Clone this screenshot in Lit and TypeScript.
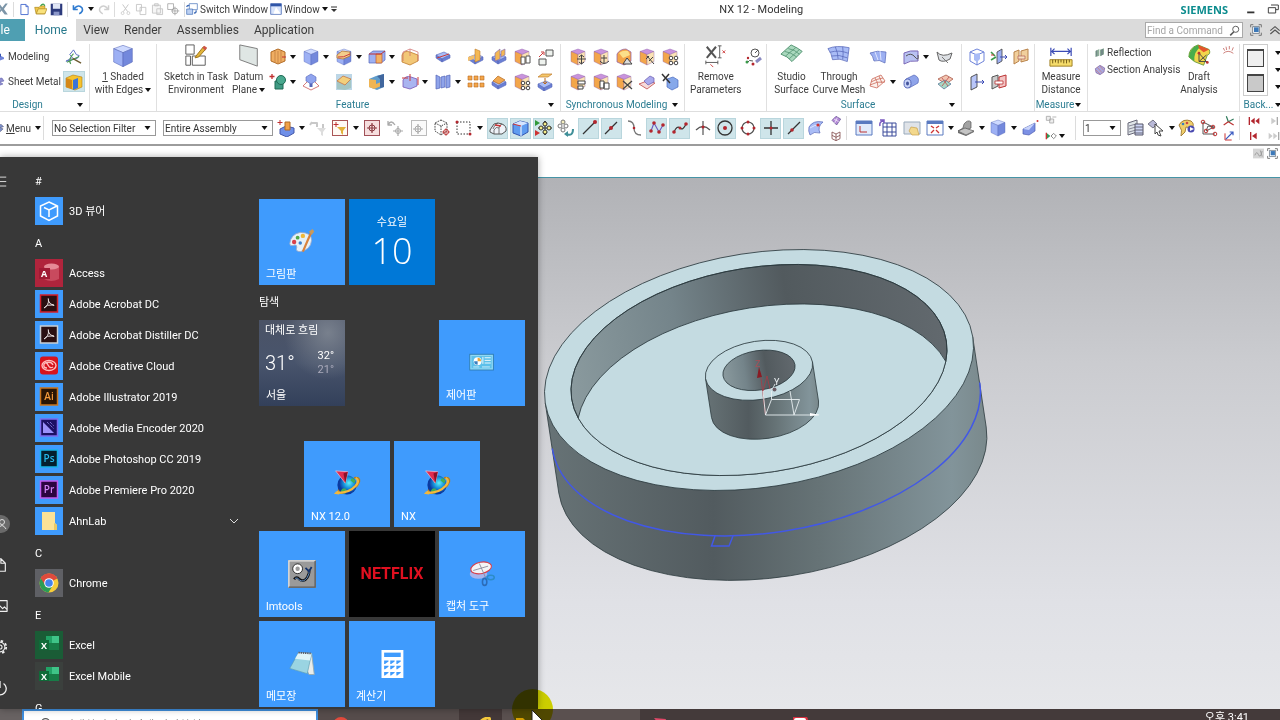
import { LitElement, html, svg, css, nothing, TemplateResult, SVGTemplateResult } from "lit";
import { customElement } from "lit/decorators.js";
import { classMap } from "lit/directives/class-map.js";

type Art = SVGTemplateResult | SVGTemplateResult[];

const draw = (art: Art, size = 18, box = 18): TemplateResult =>
  html`<svg width=${size} height=${size} viewBox="0 0 ${box} ${box}" fill="none" aria-hidden="true">${art}</svg>`;

const line = (d: string, color = "#444", w = 1, fill = "none") =>
  svg`<path d=${d} stroke=${color} stroke-width=${w} fill=${fill} stroke-linejoin="round"/>`;
const dot = (x: number, y: number, r = 1.5, fill = "#b3262e") => svg`<circle cx=${x} cy=${y} r=${r} fill=${fill}/>`;
const ring = (x: number, y: number, r: number, color = "#444", w = 1, fill = "none") =>
  svg`<circle cx=${x} cy=${y} r=${r} stroke=${color} stroke-width=${w} fill=${fill}/>`;

const box3 = (top: string, left: string, right: string, edge: string, extra: Art = []) => svg`
  <path d="M9 1 16 3.500 9 6.500 2 3.500Z" fill=${top} stroke=${edge} stroke-width=".4"/>
  <path d="M2 3.500 9 6.500V17L2 13.500Z" fill=${left} stroke=${edge} stroke-width=".4"/>
  <path d="M16 3.500 9 6.500V17L16 13.500Z" fill=${right} stroke=${edge} stroke-width=".4"/>${extra}`;
const blue = (extra: Art = []) => box3("#cdd9ff", "#9db0f4", "#7388dc", "#5364b5", extra);
const sync = (extra: Art = []) => box3("#c993dc", "#f3a64a", "#fbe3b4", "#8c5aa8", extra);
const slab = (y: number, a = "#a9bcf6", b = "#6b80d6") => svg`
  <path d=${`M2 ${y}L10 ${y - 3} 16 ${y}L8 ${y + 4}Z`} fill=${a} stroke="#5566b8" stroke-width=".6"/>
  <path d=${`M2 ${y}V${y + 3}L8 ${y + 7}V${y + 4}ZM8 ${y + 4}V${y + 7}L16 ${y + 3}V${y}Z`} fill=${b} stroke="#5566b8" stroke-width=".6"/>`;
const frame = (color: string, fill: string) =>
  svg`<rect x="1.500" y="1.500" width="15" height="15" stroke=${color} fill=${fill}/>`;
const target = (c: string, x = 9, y = 9) => line(`M${x} ${y - 5}V${y + 5}M${x - 5} ${y}H${x + 5}`, c, 1.2);
const fourDots = [ring(10, 10, 1.8, "#444", 1, "#fff"), ring(15, 10, 1.8, "#444", 1, "#fff"), ring(10, 15, 1.8, "#444", 1, "#fff"), ring(15, 15, 1.8, "#444", 1, "#fff")];

const icons: Record<string, Art> = {
  nx: svg`<path d="M-6 2H-1L3 7 7 2H10L5 9 10 16H6L2 11-2 16H-6L1 9Z" fill="#7c95a8"/>`,
  fresh: line("M4 2H11L14 5V16H4ZM11 2V5H14", "#4c6fd0", 1.3, "#fff"),
  open: svg`<path d="M1 6H7L9 4H15V15H3Z" fill="#f0c64a" stroke="#b08a20"/><path d="M3 15 6 8H18L15 15Z" fill="#f9e27c" stroke="#b08a20"/><path d="M9 4Q13-1 15 4" stroke="#3aa04a" stroke-width="1.500"/>`,
  save: svg`<path d="M1 1H17V17H1Z" fill="#2c3a7c"/><path d="M4 1H14V8H4Z" fill="#dfe5f5"/><path d="M5 12H13V17H5Z" fill="#8b97c9"/>`,
  undo: line("M3 8Q9 1 14 7 16 12 10 15M2 3V9H8", "#2f7bd0", 2.2),
  redo: line("M15 8Q9 1 4 7 2 12 8 15M16 3V9H10", "#cfcfcf", 2),
  cut: [line("M5 2 12 12M13 2 6 12", "#c4c4c4", 1.3), ring(5, 14, 2, "#c4c4c4"), ring(13, 14, 2, "#c4c4c4")],
  copy: line("M2 2H9V11H2ZM7 6H15V16H7Z", "#c4c4c4", 1.2, "#fff"),
  paste: line("M2 3H13V14H2ZM5 1H10V4H5ZM8 8H16V16H8Z", "#c4c4c4", 1.2, "#f6f6f6"),
  move: [line("M1 1H9V9H1ZM6 11H17M11 5V17", "#999"), ring(11, 11, 4, "#999")],
  swap: svg`<path d="M5 1H17V10H5Z" fill="#fff" stroke="#3d6ab5"/><path d="M1 9H10V17H1Z" fill="#bcd0f2" stroke="#3d6ab5"/><path d="M1 6Q2 3 5 4M12 15Q16 15 15 11" stroke="#3d6ab5" stroke-width="2"/>`,
  win: svg`<path d="M1 1H17V17H1Z" fill="#d8e4fb" stroke="#2f55a8"/><path d="M1 1H17V5H1Z" fill="#2f55a8"/><path d="M9 6 16 16H5Z" fill="#fff"/>`,
  modelling: svg`<path d="M-6 10 2 6 12 11V14L4 17-6 13Z" fill="#6f84da"/><path d="M2 2 6 4V10L2 8Z" fill="#3a57b5"/>`,
  metal: svg`<path d="M-4 4 8 2 12 8 4 10 10 14 2 17-4 14Z" fill="#8f8fd0" stroke="#5a5aa8"/>`,
  sketchCurve: [line("M1 14 8 10 5 7 9 2 12 7 15 8 13 11Z", "#5569c0"), line("M2 15 15 9M6 17Q3 12 9 6", "#4c9a55", 1.2), line("M8 11 17 16", "#6c5a30", 1.5)],
  convert: svg`<path d="M1 5 8 2 17 4V14L10 17 1 14Z" fill="#f6c22c" stroke="#b37c10" stroke-width=".6"/><path d="M8 7 13 5V15L8 17Z" fill="#3b74d8"/><path d="M1 5 7 7V16L1 14Z" fill="#d58818"/>`,
  shaded: blue(),
  sketchTask: svg`<path d="M2 1H11V11H2ZM2 13H7V23H2ZM9 13H23V23H9Z" stroke="#555"/><path d="M13 13 21 3 24 5 16 14 12 15Z" fill="#e2b53a" stroke="#9a6f18"/><path d="m20 4 2-2 3 2-2 3Z" fill="#cf5548"/>`,
  plane: svg`<path d="M3 1 22 5V24L3 17Z" fill="#dfe6e4" stroke="#777"/>`,
  extrude: svg`<path d="M2 4 9 1 16 4V13L9 16 2 13Z" fill="#f0ae62" stroke="#b06a24"/><path d="M6 3V15M9 3V16M12 3V15" stroke="#c98746"/><path d="M13 9H17" stroke="#c03030"/>`,
  block: blue(),
  hole: blue([svg`<path d="M2 7 7 3 15 4V8L8 11 2 10Z" fill="#f3cd8c" stroke="#b06a24" stroke-width=".7"/><path d="M3 9Q8 10 15 6" stroke="#cc3a3a"/>`]),
  blend: svg`<path d="M1 6 5 3H17V12L13 15H1Z" fill="#9db0f2" stroke="#5566b8" stroke-width=".7"/><path d="M8 6H14V15H8Z" fill="#f3b264" stroke="#c05a30" stroke-width=".7"/><path d="M1 6H13L17 3" stroke="#c03030"/>`,
  shell: svg`<path d="M1 7Q3 2 9 4L17 7V13L9 17 1 14Z" fill="#f2c777" stroke="#c07c2c" stroke-width=".8"/><path d="M2 4 9 1 17 4V13M2 4V13M9 1V8" stroke="#cf6a6a" stroke-width=".7"/>`,
  unite: svg`<path d="M6 8H14V16H6Z" fill="#3f9a83" stroke="#1f6a55"/><circle cx="12" cy="7" r="4.500" fill="#4aa98f" stroke="#1f6a55"/><path d="M3 1V6M.5 3.500H5.500" stroke="#c03030" stroke-width="1.300"/>`,
  draftHole: svg`<path d="M9 5 17 13 9 17 1 13Z" stroke="#cc5a5a" stroke-width=".8"/><path d="M9 9V14" stroke="#5566b8" stroke-width="3"/><path d="M4 4 9 1 14 4V8L9 11 4 8Z" fill="#90a4ee" stroke="#5566b8" stroke-width=".6"/>`,
  draftFace: svg`<path d="M1 1H17V17H1Z" fill="#bcd6e6"/><path d="M2 8V16L10 17V12ZM16 6V15L10 17V12Z" fill="#a5c6c4"/><path d="M2 8 8 3 16 6 10 12Z" fill="#f3cf7c" stroke="#c06a3a" stroke-width=".7"/>`,
  trim: svg`<path d="M1 6 8 3 16 1V14L9 17 1 14Z" fill="#5f9ccb"/><path d="M1 6 8 7V11L13 9V13L6 16 1 14Z" fill="#efb554"/><path d="M9 3 16 1V14L12 15V6Z" fill="#41679e"/>`,
  offset: svg`<path d="M2 7Q5 2 10 4L16 6V13L9 16 2 14Z" fill="#a9b4f0" stroke="#7a55b5" stroke-width=".8"/><path d="M9 1V8M1 5H7M17 4V12" stroke="#cc3a3a"/>`,
  slabTrim: [slab(7), line("M3 10 15 6", "#cc3a3a")],
  patternCol: svg`<path d="M2 2 6 4V15L2 16ZM7 4 11 3V14L7 15ZM12 3 16 2V14L12 15Z" fill="#8fa4ea" stroke="#5566b8" stroke-width=".7"/>`,
  orangeA: [slab(9), svg`<path d="M8 1 13 3V12L8 14Z" fill="#f4b854" stroke="#c07c2c" stroke-width=".6"/><path d="M1 9 7 7V11L1 13Z" fill="#f4c06c"/>`],
  orangeB: [slab(9), svg`<path d="M5 5 10 1V11L5 13ZM11 3 15 1V7L11 9Z" fill="#f4b854" stroke="#7a68b8" stroke-width=".6"/>`],
  syncCopy: sync(line("M8 9H12V16H8ZM13 8H17V15H13Z", "#555", 1, "#fff")),
  align: [line("M10 2H17V8H10ZM3 11H10V17H3Z", "#555", 1, "#eef2ee"), line("M3 9 7 5M5 4H8V7", "#cc3a3a")],
  dotsO: [3, 9, 15].map((x) => svg`<path d=${`M${x - 2} 3H${x + 2}V7H${x - 2}ZM${x - 2} 10H${x + 2}V14H${x - 2}Z`} fill="#f3a64a" stroke="#b86a20" stroke-width=".6"/>`),
  slabO: [slab(9), svg`<path d="M3 8 8 3 15 7 9 11Z" fill="#f0a850" stroke="#b86a20" stroke-width=".7"/>`],
  syncDots: sync(fourDots),
  liftO: [slab(11), svg`<path d="M2 4 6 1H16L12 4Z" fill="#f4c86c" stroke="#c07c2c" stroke-width=".7"/><path d="M9 5V11M7 9 9 11 11 9" stroke="#b86a20"/>`],
  s1: sync(line("M8 11H17M12.500 7V16M10 9 12.500 7 15 9M10 14 12.500 16 15 14", "#444")),
  s2: sync(line("M12 7V16M9 10H15M8 13Q12 18 17 13", "#444")),
  s3: svg`<path d="M2 6Q5 1 11 1L16 4V13L9 17 2 14Z" fill="#f3a64a" stroke="#8c5aa8" stroke-width=".7"/><path d="M4 5Q8 2 13 3L15 7 8 10Z" fill="#fbe08a"/><path d="M8 16 12 10 17 16Z" fill="#ddd" stroke="#444"/>`,
  s4: sync(line("M9 8 16 16M11 13 15 9M8 11 11 8", "#444")),
  s5: sync(fourDots),
  s6: sync(line("M9 8H16V11H9ZM9 13H14V16H9Z", "#444", 1, "#fff")),
  s7: sync(line("M8 8H12V15H8ZM12 10H17V16H12Z", "#444", 1, "#fff")),
  s8: sync(line("M8 8 17 16M17 8 8 16", "#444", 1.3)),
  s9: svg`<path d="M1 11 9 8 17 10 9 16Z" fill="#f6dada" stroke="#cc6a6a"/><path d="M6 8 12 3 16 5V9L10 12Z" fill="#a9a9ec" stroke="#6a5ab0" stroke-width=".7"/>`,
  s10: [svg`<path d="M6 6 12 4 17 7V14L11 17 6 14Z" fill="#86a8ea" stroke="#4c6cc0" stroke-width=".7"/>`, line("M1 1 9 10M8 1 2 8", "#333", 1.5)],
  removeP: [line("M3 3 13 15M13 3 3 15", "#555", 2.2), line("M17 2V15M15 2H19M15 15H19M2 20H15M2 18V22M15 18V22", "#555"), line("M20 7 23 10M23 7 20 10M7 22 10 25", "#cc3a3a")],
  params: [ring(10, 5, 4, "#555"), line("M10 5 13 2M2 15Q4 11 8 13", "#555"), line("M11 14 16 10", "#8a8ac0", 3), dot(2, 14, 1.5, "#3a9a4a"), dot(8, 16), dot(3, 10, 1.2)],
  studio: svg`<path d="M1 11 12 1Q19 4 24 8L13 19Q8 13 1 11Z" fill="#a9d8bd" stroke="#4c8f6c"/><path d="M5 8Q12 9 18 14M9 5Q16 6 21 11M6 13 17 4M10 16 21 6" stroke="#4c8f6c" stroke-width=".8"/>`,
  mesh: svg`<path d="M1 5Q10 1 24 4L22 19Q14 15 6 17Q5 10 1 5Z" fill="#a9bcf6" stroke="#5566b8" stroke-width=".8"/><path d="M9 3Q12 10 12 16M17 3Q18 10 17 17M3 9Q13 6 23 10M5 13Q13 11 22 15" stroke="#5566b8" stroke-width=".8"/>`,
  sheet: svg`<path d="M1 5Q8 2 17 4L16 15Q10 11 5 13Q4 8 1 5Z" fill="#9db0f2" stroke="#5566b8" stroke-width=".7"/><path d="M6 4 9 12M11 3 12 12" stroke="#dfe5ff"/>`,
  ruled: svg`<path d="M2 5Q8 2 16 3V13Q8 12 2 16Z" fill="#b9c2f2" stroke="#7a68b8"/><path d="M4 8Q9 4 13 9T16 7" stroke="#555"/>`,
  fold: svg`<path d="M1 4Q6 10 16 5L14 11Q7 15 3 12Z" fill="#dde0e4" stroke="#666"/><path d="M6 9 12 15" stroke="#777"/>`,
  sweep: svg`<path d="M3 6 12 2 16 8 8 15 1 13Z" fill="#fbf1ec" stroke="#cc6a5a" stroke-width=".8"/><path d="M2 9Q7 6 14 5M6 5Q9 9 9 14M1 12Q8 8 16 9M10 3 13 10" stroke="#cc6a5a" stroke-width=".8"/>`,
  tube: svg`<path d="M4 6 12 2Q18 4 16 10L7 15Z" fill="#8fa4ea" stroke="#5566b8" stroke-width=".7"/><ellipse cx="5.500" cy="10.500" rx="3.500" ry="4.500" fill="#c9d4f8" stroke="#5566b8"/><ellipse cx="5.500" cy="10.500" rx="1.500" ry="2" fill="#44549c"/>`,
  patch: svg`<path d="M2 6 10 2 17 6 10 11Z" fill="#f3c4b0" stroke="#aa5a4a" stroke-width=".8"/><path d="M2 11 9 7 15 11 8 16Z" fill="#a9d8c4" stroke="#5a7a9a" stroke-width=".8"/><path d="M6 5 12 13M13 4 6 13" stroke="#bb4a4a" stroke-width=".8"/>`,
  wire: svg`<path d="M9 1 16 4V13L9 17 2 13V4ZM2 4 9 7 16 4M9 7V17" stroke="#6f84da"/><path d="M6 6 12 5V11L9 14 6 12Z" fill="#a9bcf6"/>`,
  moveF: svg`<path d="M7 4 12 1V13L7 16Z" fill="#9db0f2" stroke="#444" stroke-width=".8"/><path d="M10 9H17M15 7 17 9 15 11" stroke="#3a4ab5"/><path d="M1 4 5 8M1 12 6 9" stroke="#3a9a4a" stroke-width="1.600"/><path d="M1 7H4" stroke="#c33"/>`,
  orangeF: svg`<path d="M2 4 7 2V13L2 16ZM9 3 16 1V12L9 14Z" fill="#f1cf9c" stroke="#b8824a"/><path d="M6 8H13V11H6Z" fill="#f8e4c0" stroke="#b05a5a" stroke-width=".7"/>`,
  moveE: svg`<path d="M3 4 9 1V14L3 17Z" fill="#b9c6f8" stroke="#444" stroke-width=".9"/><path d="M7 9H16M14 7 16 9 14 11" stroke="#3a4ab5"/>`,
  redF: svg`<path d="M2 4 8 2V13L2 16Z" fill="#ccc" stroke="#555"/><path d="M9 4 16 2V13L9 15Z" fill="#f3c4c4" stroke="#b33"/><path d="M5 8H13V11H5Z" fill="#fff" stroke="#b33" stroke-width=".8"/>`,
  measure: svg`<path d="M2 4V13M24 4V13M3 8H23M6 5 3 8 6 11M20 5 23 8 20 11" stroke="#3a4ab5" stroke-width="1.300"/><path d="M1 17H25V24H1Z" fill="#f5dc6a" stroke="#9a7c20"/><path d="M4 17V21M7 17V20M10 17V21M13 17V20M16 17V21M19 17V21M22 17V20" stroke="#6a5410"/>`,
  reflect: svg`<path d="M2 6 8 3V13L2 15ZM9 4 15 2V11L9 14Z" fill="#8fae9a"/><path d="M4 5V14M11 4V13M13 3V12" stroke="#5c6c78"/>`,
  section: svg`<path d="M2 7 9 2 16 6 15 12 9 16 3 13Z" fill="#a9a9e0" stroke="#7a5a9a"/><path d="M5 5 12 13M9 3 14 9M3 9 9 15" stroke="#cc7a7a"/>`,
  draftA: svg`<path d="M2 14Q2 4 12 1L24 6Q26 11 22 12L18 23 8 19Z" fill="#f1d54a" stroke="#6a9a3a"/><path d="M2 14Q3 4 12 1L15 3Q7 8 8 19Z" fill="#49ad4b"/><path d="M12 1 24 6 18 9 13 5Z" fill="#e4552c"/><path d="M13 10 22 20M13 19 21 12M13 10V19H22" stroke="#444"/><circle cx="13" cy="10" r="1.500" fill="#b33"/><circle cx="22" cy="20" r="1.500" fill="#b33"/>`,
  spark: line("M2 14Q9 8 17 14M4 10 2 6M7 9 6 4M11 8 11 3M15 10 17 5", "#b5443c"),
  addCube: svg`<path d="M3 10 9 7 17 9V14L10 18 3 15Z" fill="#6f8fe8" stroke="#4457a8"/><path d="M8 3H13V11H8Z" fill="#f1a048" stroke="#b06a24"/><path d="M3 1V6M.5 3.500H5.500" stroke="#c03030"/>`,
  filterG: [line("M2 4H8V8M14 5V9M1 6 3 3", "#c8c8c8", 2), svg`<path d="M8 9H17L14 13V17L12 16V13Z" fill="#ddd"/>`],
  filterB: [frame("#a55", "#fffaf4"), line("M5 3V8M2.500 5.500H7.500", "#c03030"), svg`<path d="M6 8H15L12 12V16L10 14V12Z" fill="#e3b23a"/>`],
  targetR: [frame("#a05058", "#f6dede"), ring(9, 9, 3, "#8a3a40"), target("#8a3a40")],
  rotate: [line("M2 6Q5 0 9 6M2 2V6H6", "#aaa", 1.3), target("#aaa", 12, 12), ring(12, 12, 2.5, "#aaa")],
  targetG: [frame("#bbb", "#fafafa"), ring(8, 10, 3, "#aaa"), target("#aaa", 8, 10)],
  dashCube: svg`<path d="M8 1 14 4V12L8 16 2 12V4ZM2 4 8 7 14 4M8 7V16" stroke="#444" stroke-dasharray="1.500 1"/><circle cx="13" cy="13" r="2.500" stroke="#b33"/><path d="M13 9V17M9 13H17" stroke="#b33" stroke-width=".7"/>`,
  marquee: [svg`<path d="M2 3H15V15H2Z" stroke="#333" stroke-dasharray="1.500 1.500"/>`, dot(2, 3), dot(15, 15)],
  h1: svg`<path d="M1 11 5 5Q9 3 13 5 18 7 17 12L13 15H5L1 13Z" fill="#eef2f8" stroke="#444" stroke-width=".9"/><path d="M5 15V11Q7 7 10 9V15M9 4Q5 6 4 10M13 5Q10 6 10 9" stroke="#555" stroke-width=".8"/><path d="M6 6 12 7" stroke="#c33" stroke-width="1.300"/>`,
  h2: svg`<path d="M2 5 9 2 17 4V13L10 17 2 14Z" fill="#5f9cf0" stroke="#3355b0"/><path d="M2 5 9 2 17 4 10 7Z" fill="#d5e5ff"/><path d="M10 7V17" stroke="#fff"/><path d="M2 5 10 7" stroke="#c33"/>`,
  h3: svg`<path d="M1 1 6 4 1 7Z" fill="#2f9a3a"/><path d="M1 11 6 14 1 17Z" fill="#c33"/><path d="M11 2V16M4 9H18M11 2 9 5M11 2 13 5M11 16 9 13M11 16 13 13" stroke="#333"/><circle cx="11" cy="5" r="2" fill="#f6ef8a" stroke="#333"/><circle cx="11" cy="13" r="2" fill="#f6ef8a" stroke="#333"/><circle cx="7" cy="9" r="2" fill="#f6ef8a" stroke="#333"/><circle cx="15" cy="9" r="2" fill="#f6ef8a" stroke="#333"/>`,
  h4: svg`<circle cx="6" cy="3" r="2" stroke="#777" fill="#f6efc0"/><circle cx="3" cy="7" r="2" stroke="#777"/><circle cx="9" cy="7" r="2" stroke="#777"/><circle cx="6" cy="11" r="2" stroke="#777"/><path d="M9 15Q16 18 16 10" stroke="#3f8f98" stroke-width="2"/><path d="M7 15 11 12V18Z" fill="#3f8f98"/>`,
  endp: [line("M3 15 15 3", "#333", 1.3), dot(15, 3, 2)],
  midp: [line("M3 15 15 3", "#333", 1.3), dot(9, 9, 2)],
  tang: [line("M3 2Q9 2 9 9T16 16", "#777", 1.3), dot(9, 9, 1.3)],
  poles: [line("M3 12 6 4 11 13 15 6", "#6a5ac0", 1.1), dot(3, 12, 1.8), dot(6, 4, 1.8), dot(11, 13, 1.8), dot(15, 6, 1.8)],
  spline: [line("M3 13Q6 6 9 9T15 5", "#333", 1.1), dot(3, 13, 1.8), dot(9, 9, 1.5), dot(15, 5, 1.8)],
  inter: [line("M9 2V16M2 11Q9 4 16 11", "#555", 1.2), dot(9, 8, 1.5)],
  centre: [ring(9, 9, 7, "#333", 1.3), dot(9, 9, 2)],
  quad: [ring(9, 9, 6, "#555", 1.2), dot(9, 3), dot(9, 15), dot(3, 9), dot(15, 9)],
  cross: [line("M9 2V16M2 9H16", "#333", 1.3), dot(9, 9)],
  ptOn: [line("M3 15 15 3", "#333", 1.3), dot(7, 11, 1.8)],
  face: svg`<path d="M2 8Q6 1 16 3 10 8 13 14 7 12 3 16 1 12 2 8Z" fill="#a9bcf6" stroke="#5566b8" stroke-width=".7"/><path d="M3 9Q8 5 12 7" stroke="#dfe6ff"/><circle cx="11" cy="6" r="1.600" fill="#c33"/>`,
  tinyA: svg`<path d="M3 8 9 2 16 6 10 15Z" fill="#b58ad8" stroke="#5a4a8a"/><path d="M6 6 13 10M11 4 7 12" stroke="#fff"/>`,
  tinyB: line("M3 3 9 6V16L3 13ZM9 6 15 3V13L9 16M3 8 9 11 15 8", "#855", 1.3),
  wcs: svg`<path d="M1 2H17V16H1Z" fill="#e2ebfb" stroke="#5a7ac0"/><path d="M1 2H17V5H1Z" fill="#5a7ac0"/><path d="M5 7V13H12" stroke="#b33"/>`,
  gridT: svg`<path d="M4 4H17V17H4ZM8 4V17M13 4V17M4 8H17M4 13H17" stroke="#3a4a9a"/><path d="M1 1H5V4M1 7Q0 2 5 2" stroke="#7a5ac0" stroke-width="1.500"/>`,
  hand: svg`<path d="M1 3H17V15H1Z" fill="#dfe3e8" stroke="#9ab"/><path d="M8 8 14 9 16 16H9L6 12Z" fill="#f3d88c" stroke="#c8a24a" stroke-width=".7"/>`,
  fit: svg`<path d="M1 2H17V16H1Z" fill="#fff" stroke="#5a7ac0"/><path d="M1 2H17V5H1Z" fill="#5a7ac0"/><path d="M5 7 8 9M13 7 10 9M5 14 8 11M13 14 10 11" stroke="#c33" stroke-width="1.300"/>`,
  bracket: svg`<path d="M1 12 6 9 7 5Q11 0 14 3V9L8 12Z" fill="#a2a2a2" stroke="#555" stroke-width=".7"/><path d="M1 12 8 9 17 12 9 16Z" fill="#c4c4c4" stroke="#555" stroke-width=".7"/><path d="M1 12V14L9 17 17 13V12L9 16Z" fill="#6c6c6c"/>`,
  wedge: svg`<path d="M2 10 14 4V12L8 16 2 15Z" fill="#7c90e4" stroke="#4c5cb0" stroke-width=".7"/><path d="M2 10 8 11 14 4" fill="#c9d4fa"/><circle cx="16.500" cy="2" r="1" fill="#c33"/>`,
  gstack: line("M2 2H8V8H2ZM7 6H13V12H7ZM11 3H17", "#aaa", 1.3, "#eee"),
  play: svg`<path d="M2 4 8 9 2 14Z" fill="#2f9a5a"/><path d="M2 4V14" stroke="#c33" stroke-width="2"/><path d="M9 9 13 5 17 9 13 13Z" stroke="#888" stroke-width="1.500"/>`,
  layers: svg`<path d="M1 4 10 1V13L1 16Z" fill="#dfe5e8" stroke="#667"/><path d="M2 7 9 5M2 10 9 8M2 13 9 11" stroke="#889"/><path d="M8 5H16V16H8Z" fill="#cdd5f5" stroke="#556"/><path d="M8 8H16M8 11H16M8 14H16" stroke="#667"/>`,
  pick: svg`<path d="M1 5 6 1 10 5 6 9Z" fill="#b9b9d8" stroke="#778"/><path d="M8 5 16 12H12L14 17 11 16 10 13 8 15Z" fill="#fff" stroke="#444"/>`,
  paint: svg`<path d="M1 6Q5-1 13 2 17 5 14 9L8 8 7 13 3 17Q5 11 1 6Z" fill="#f0cf6a" stroke="#a5803a"/><circle cx="5" cy="5" r="1.300" fill="#3a80c0"/><circle cx="9" cy="4" r="1.300" fill="#c44"/><circle cx="13" cy="10" r="3.500" fill="#4a4ab0"/><path d="M12 8 16 10 12 12Z" fill="#fff"/>`,
  nodes: [line("M3 3V15H15M3 3 13 8M6 12 14 8 8 7Z", "#555"), ring(3, 3, 1.8, "#b33"), ring(13, 8, 1.8, "#b33"), ring(6, 12, 1.8, "#b33"), ring(15, 15, 1.8, "#b33")],
  csysA: svg`<path d="M8 10 5 2M8 10 16 6" stroke="#2f7a5a" stroke-width="1.800"/><path d="M8 10 1 15M8 10 16 15" stroke="#b33" stroke-width="1.800"/>`,
  csysB: svg`<path d="M3 5V15H13" stroke="#c33" stroke-width="1.500"/><path d="M4 14 15 3M10 3H15V8" stroke="#3a5ac0" stroke-width="1.800"/>`,
  rew: svg`<path d="M2 3V15" stroke="#b3262e" stroke-width="2"/><path d="M10 4V14L4 9ZM17 4V14L11 9Z" fill="#b3262e"/>`,
  back: svg`<path d="M4 3V15" stroke="#b3262e" stroke-width="2"/><path d="M13 4V14L6 9Z" fill="#b3262e"/>`,
  fwd: svg`<path d="M14 3V15" stroke="#aaa" stroke-width="2"/><path d="M5 4V14L12 9Z" fill="#ccc"/>`,
  ffw: svg`<path d="M16 3V15" stroke="#aaa" stroke-width="2"/><path d="M1 4V14L7 9ZM8 4V14L14 9Z" fill="#ccc"/>`,
  menuI: svg`<path d="M-4 1H12L17 6 10 8 16 11 10 17H-4Z" fill="#7c8fc8" stroke="#446"/>`,
  full: svg`<path d="M1 5V1H5M13 1H17V5M17 13V17H13M5 17H1V13" stroke="#777" stroke-width="1.500"/><path d="M4 4H14V14H4Z" fill="#fff" stroke="#456"/><path d="M6 5H13V12H6Z" fill="#3b78b8"/>`,
  chev: line("M2 10 9 4 16 10M2 15 9 9 16 15", "#555", 1.8),
  lens: [ring(11, 7, 5, "#555", 1.5), line("M8 11 2 17", "#555", 2.5)],
  mini: line("M3 13H13", "#333", 2.5),
  restore: line("M6 3H17V10H13M2 7H13V15H2Z", "#444", 1.5),
  grayTool: svg`<path d="M0 1H18V17H0Z" fill="#d5d5d5"/><path d="M3 12Q6 4 9 11T15 5M12 4 15 14" stroke="#999" stroke-width="1.500"/>`,
  burger: line("M0 3.500H16M0 8.500H16M0 13.500H16", "#eee", 1),
  user: svg`<circle cx="9" cy="9" r="9" fill="#6a6a6a"/><circle cx="10" cy="7" r="2.500" stroke="#ddd"/><path d="M6 14Q10 7 14 14" stroke="#ddd"/>`,
  docW: line("M2 2H10L15 7V16H2ZM10 2V7H15", "#eee", 1.3),
  pic: line("M1 3H17V15H1ZM3 13 8 8 12 12 14 10 17 13", "#eee", 1.3),
  gear: svg`<circle cx="9" cy="9" r="7" stroke="#eee" stroke-width="2" stroke-dasharray="2.750 2.750"/><circle cx="9" cy="9" r="5.500" stroke="#eee" stroke-width="1.200"/><circle cx="9" cy="9" r="2.300" stroke="#eee" stroke-width="1.200"/>`,
  power: line("M9 1V9M5 4A7 7 0 1 0 13 4", "#eee", 1.5),
};

const icon = (name: string, size = 16) => draw(icons[name], size);
const caret = html`<svg class="caret" width="6" height="4" viewBox="0 0 6 4" aria-hidden="true"><path d="M0 0H6L3 4Z" fill="#111"/></svg>`;

const adobe = (edge: string, ground: string, ink: string, text: string) => svg`
  <rect width="28" height="28" fill="#3f9bfd"/>
  <rect x="5.500" y="5" width="17" height="17" fill=${ground} stroke=${edge} stroke-width="1.500"/>
  <text x="14" y="17" text-anchor="middle" font-size="10" font-weight="600" font-family="Open Sans, sans-serif" fill=${ink}>${text}</text>`;
const acrobat = (edge: string) => svg`
  <rect width="28" height="28" fill="#3f9bfd"/>
  <rect x="5.500" y="5" width="17" height="17" fill="#2a1012" stroke=${edge} stroke-width="1.500"/>
  <path d="M9 18Q14 15 13.500 9.500 13 7 13.500 11 15 15 19 15 20 16 17 15 12 14 9 18Z" stroke="#e8e0e0"/>`;
const excel = (ground: string) => svg`
  <rect width="28" height="28" fill=${ground}/>
  <path d="M11 5H24V19H11Z" fill="#21a366"/><path d="M17 5H24V12H17Z" fill="#3fc488"/><path d="M11 12H24V19H11Z" fill="#177c47"/>
  <rect x="4" y="9" width="10" height="10" fill="#0f6b38"/>
  <text x="9" y="17.500" text-anchor="middle" font-size="9" font-weight="700" font-family="Open Sans, sans-serif" fill="#fff">X</text>`;

interface App { name: string; art?: SVGTemplateResult; head?: boolean; more?: boolean; }
const apps: App[] = [
  { name: "#", head: true },
  { name: "3D 뷰어", art: svg`<rect width="28" height="28" fill="#3f9bfd"/><path d="M14 5 22.500 9V19L14 23.500 5.500 19V9ZM9 10.500 14 13 22 9M14 13V20" stroke="#fff" stroke-width="1.500"/>` },
  { name: "A", head: true },
  { name: "Access", art: svg`<rect width="28" height="28" fill="#b0243c"/><path d="M9 8V20Q16 24 24 20V8Z" fill="#c84a5e"/><ellipse cx="16.500" cy="7.500" rx="7.500" ry="3" fill="#e58a96"/><rect x="4" y="9" width="11" height="11" fill="#a01a34"/><text x="9" y="18" text-anchor="middle" font-size="9" font-weight="700" font-family="Open Sans, sans-serif" fill="#fff">A</text>` },
  { name: "Adobe Acrobat DC", art: acrobat("#d4202a") },
  { name: "Adobe Acrobat Distiller DC", art: acrobat("#c9ced4") },
  { name: "Adobe Creative Cloud", art: svg`<rect width="28" height="28" fill="#3f9bfd"/><rect x="5" y="4.500" width="18" height="18" rx="3" fill="#d8141c"/><ellipse cx="14" cy="13.500" rx="7" ry="5" stroke="#fbb" stroke-width="1.400"/><path d="M18 15Q15 17 13 13T9 12Q8 16 12 16M11 11Q16 9 18 13" stroke="#fbb" stroke-width="1.400"/>` },
  { name: "Adobe Illustrator 2019", art: adobe("#c9741c", "#2a1504", "#f39a3c", "Ai") },
  { name: "Adobe Media Encoder 2020", art: svg`<rect width="28" height="28" fill="#3f9bfd"/><rect x="5.500" y="5" width="17" height="17" fill="#1c1064" stroke="#7c6cf0" stroke-width="1.500"/><path d="M8 8 19 19H8Z" fill="#9a90fa"/><path d="M12 8 19 15M15 8 19 12" stroke="#9a90fa" stroke-dasharray="1 1"/>` },
  { name: "Adobe Photoshop CC 2019", art: adobe("#18b4e8", "#04202e", "#28b8ea", "Ps") },
  { name: "Adobe Premiere Pro 2020", art: adobe("#c05cf0", "#2c0440", "#d084f4", "Pr") },
  { name: "AhnLab", more: true, art: svg`<rect width="28" height="28" fill="#3f9bfd"/><path d="M7 5H20V16L22 18V23H7Z" fill="#fbe296"/><path d="M19 16 22 18V23H19Z" fill="#e9c864"/>` },
  { name: "C", head: true },
  { name: "Chrome", art: svg`<rect width="28" height="28" fill="#5f6065"/><circle cx="14" cy="14" r="9.500" fill="#f7cd3a"/><path d="M14 14 5.800 9.200A9.500 9.500 0 0 1 22.200 9.500Z" fill="#de4a3c"/><path d="M14 14 5.800 9.200A9.500 9.500 0 0 0 13.500 23.500L18 16Z" fill="#2c9c55"/><path d="M14 9.500H22.300A9.500 9.500 0 0 0 5.800 9.200L10 16Z" fill="#de4a3c"/><circle cx="14" cy="14" r="4.800" fill="#fff"/><circle cx="14" cy="14" r="3.800" fill="#4484ee"/>` },
  { name: "E", head: true },
  { name: "Excel", art: excel("#1a5c36") },
  { name: "Excel Mobile", art: excel("#3b403d") },
  { name: "G", head: true },
];

const globe = svg`
  <defs><radialGradient id="sea" cx=".6" cy=".4"><stop offset="0" stop-color="#5ff0f4"/><stop offset=".5" stop-color="#1a9ae0"/><stop offset="1" stop-color="#0a3aa0"/></radialGradient></defs>
  <path d="M8 20Q3 28 14 26 27 22 30 13 31 8 24 9" stroke="#b9801c" stroke-width="2.200"/>
  <circle cx="16" cy="17" r="11" fill="url(#sea)"/>
  <path d="M9 24Q10 20 14 21 17 23 14 27 10 27 9 24ZM22 9 26 12 24 15 20 12Z" fill="#3fae5a"/>
  <path d="M3 26Q18 27 26 18 31 12 26 9" stroke="#f4b83c" stroke-width="2.600"/>
  <path d="M1 27 6 23 7 28Z" fill="#f4b83c"/>
  <path d="M3 1 17 2 14 15Z" fill="#e02c50" stroke="#fbd0d8" stroke-width=".7"/><path d="M12 4 17 2 14 15Z" fill="#8c1028"/>`;

interface Tile { label?: string; art?: SVGTemplateResult; kind?: string; start?: number; body?: TemplateResult; }
const tileGroups: { title?: string; cls: string; tiles: Tile[] }[] = [
  { cls: "first", tiles: [
    { label: "그림판", art: svg`<path d="M2 18Q3 7 14 5 27 5 27 14 26 25 14 27 8 27 10 22 10 18 6 20 2 21 2 18Z" fill="#e6f1f8" stroke="#9ac"/><circle cx="7" cy="16" r="2.500" fill="#d8404a"/><circle cx="11" cy="11" r="2.200" fill="#52a84a"/><circle cx="17" cy="9" r="2.500" fill="#f0b83a"/><circle cx="14" cy="17" r="2" fill="#3a80d0"/><path d="M17 27 26 6" stroke="#d8823c" stroke-width="2.500"/><path d="M24 4 28 1 30 4 27 8Z" fill="#c89a5c"/>` },
    { kind: "date", body: html`<span class="weekday">수요일</span><span class="day">10</span>` },
  ] },
  { title: "탐색", cls: "second", tiles: [
    { kind: "weather", label: "서울", body: html`<span class="sky">대체로 흐림</span><span class="temps"><span class="now">31°</span><span class="range"><span>32°</span><span class="low">21°</span></span></span>` },
    { label: "제어판", start: 5, art: svg`<rect x="2" y="6" width="27" height="18" fill="#8fd8f4" stroke="#2c7ab0"/><rect x="4" y="8" width="23" height="14" fill="#5cc0ea"/><circle cx="11" cy="14" r="4.500" fill="#fff"/><path d="M11 14V10A4 4 0 0 1 15 14Z" fill="#f0a83a"/><path d="M11 18A4 4 0 0 1 7 14H11Z" fill="#3a80c0"/><path d="M19 10H26M19 13H26M19 16H26M17 9V17" stroke="#fff"/><path d="M6 20.500H13M16 20.500H25" stroke="#d8f0fa"/>` },
  ] },
  { cls: "third", tiles: [
    { label: "NX 12.0", start: 2, art: globe },
    { label: "NX", start: 4, art: globe },
    { label: "lmtools", start: 1, art: svg`<rect x="0" y="0" width="32" height="32" fill="#9a9a9a"/><path d="M1 31V1H31" stroke="#e4e4e4" stroke-width="1.500"/><path d="M1 31H31V1" stroke="#5c5c5c" stroke-width="1.500"/><circle cx="11" cy="10" r="4" fill="#9a9a9a" stroke="#fff" stroke-width="3"/><circle cx="11" cy="10" r="5.600" stroke="#222"/><path d="M7 22Q10 18 13 22 18 26 22 20 25 15 24 11" stroke="#111" stroke-width="3"/><path d="M8 21Q11 19 13 23 18 26 22 20 25 15 24 12" stroke="#6aa0e0"/><path d="M20 9 24 13 27 8" stroke="#14336c" stroke-width="2"/>` },
    { kind: "netflix", body: html`<span class="brand">NETFLIX</span>` },
    { label: "캡처 도구", start: 5, art: svg`<ellipse cx="12" cy="16" rx="10" ry="5.500" fill="#a8b4ec"/><ellipse cx="15" cy="9" rx="12" ry="6.500" transform="rotate(-12 15 9)" fill="#f3f4f6" stroke="#d8404a" stroke-width="1.200"/><path d="M13 4 20 20M6 12 23 7" stroke="#889"/><ellipse cx="19" cy="25" rx="2.500" ry="4" stroke="#2c6cb8" stroke-width="1.800"/><ellipse cx="26" cy="20" rx="4" ry="2.500" stroke="#2c8cc8" stroke-width="1.800"/>` },
    { label: "메모장", start: 1, art: svg`<path d="M12 3 27 4 30 28 24 28Z" fill="#e8ecea" stroke="#9aa"/><path d="M12 3 27 4 22 27 2 21Z" fill="#9ad4e2" stroke="#5a9ab0" stroke-width=".7"/><path d="M12 3 27 4 25 12 8 10Z" fill="#dff4f8"/><path d="M12 3 27 4" stroke="#556" stroke-width="2" stroke-dasharray="1.500 1"/>` },
    { label: "계산기", start: 3, art: svg`<rect x="4" y="0" width="25" height="32" fill="#fff"/><path d="M7 3H26V8H7Z" fill="#3f9bfd"/>${[12, 18, 25].map((y) => [7, 14, 21].map((x) => svg`<path d=${`M${x} ${y}H${x + 5}V${y + 1}L${x + 1} ${y + 4}H${x}Z`} fill="#3f9bfd"/>`))}` },
  ] },
];

@customElement("app-root")
export class AppRoot extends LitElement {
  static styles = css`
    :host {
      display: flex; flex-direction: column; height: 100vh; overflow: hidden; position: relative;
      font: 10px/13px Roboto, "Noto Sans CJK KR", sans-serif; color: #3c3c3c; background: #fff;
    }
    * { box-sizing: border-box; }
    button { font: inherit; color: inherit; background: none; border: 0; padding: 0; margin: 0; display: flex; align-items: center; flex: none; }
    svg { display: block; flex: none; }
    .quick { display: flex; align-items: center; height: 19px; flex: none; overflow: hidden; font-size: 11px; }
    .quick svg { margin-top: -1px; }
    .logo { width: 13px; }
    .bar { flex: none; width: 1px; background: #dcdcdc; align-self: stretch; margin: 2px 0; }
    .tools { display: flex; align-items: center; gap: 3px; padding: 0 4px; }
    .words { gap: 2px; padding: 0 4px 0 1px; font-size: 10px; }
    .title { flex: 1; margin: 0; text-align: center; font: inherit; font-size: 11px; color: #333; }
    .siemens { color: #0c8c8e; font: 700 11px/14px "Open Sans", sans-serif; }
    .winctl { display: flex; gap: 9px; padding: 0 1px 0 17px; }
    .tabs { display: flex; align-items: stretch; height: 22px; flex: none; background: #dbdbdb; font-size: 12px; overflow: hidden; }
    .tabs nav { display: flex; }
    .tab { padding: 0 8px 0 7px; }
    .file { background: #4f9fb2; color: #fff; margin-left: -9px; padding: 0 15px 0 0; }
    .home { background: #fff; color: #28798c; padding: 0 9px 0 10px; }
    .tail { margin-left: auto; display: flex; align-items: center; gap: 7px; margin-right: -1px; }
    .find { display: flex; align-items: center; width: 98px; height: 16px; background: #fff; border: 1px solid #a9a9a9; padding-right: 2px; }
    .find input { flex: 1; min-width: 0; border: 0; padding: 0 1px; font: inherit; font-size: 10px; background: none; outline: 0; }
    .find input::placeholder { color: #a5a5a5; opacity: 1; }
    .ribbon { display: flex; height: 71px; flex: none; border-bottom: 1px solid #dedede; overflow: hidden; }
    .group { display: flex; flex-direction: column; flex: none; border-right: 1px solid #e0e0e0; margin: 3px 0 0; }
    .body { display: flex; flex: 1; min-height: 0; }
    .caption { display: flex; align-items: center; height: 13px; padding-right: 6px; color: #2c7d92; font-size: 10px; flex: none; }
    .caption span { flex: 1; text-align: center; white-space: nowrap; }
    .g-design { width: 112px; margin-left: -22px; }
    .g-design .body { padding-left: 20px; justify-content: space-between; padding-right: 4px; }
    .g-shaded { width: 67px; }
    .g-feature { width: 404px; }
    .g-sync { width: 124px; }
    .g-param { width: 82px; }
    .g-surface { width: 195px; }
    .g-assy { width: 73px; }
    .g-measure { width: 53px; }
    .g-analysis { width: 152px; }
    .g-back { width: 60px; }
    .stack { display: flex; flex-direction: column; }
    .stack > * { height: 25px; }
    .name { gap: 1px; white-space: nowrap; }
    .big { flex-direction: column; text-align: center; white-space: nowrap; }
    .big > svg { margin-bottom: 2px; }
    .big .caret { display: inline-block; vertical-align: middle; margin: 0 0 0 2px; }
    .g-shaded .big, .g-measure .big { flex: 1; }
    .g-feature .body { padding-left: 7px; }
    .g-feature .big { width: 64px; margin-right: 4px; }
    .g-feature .big + .big { width: 33px; margin-right: 4px; }
    .grid6 { display: grid; grid-template-columns: repeat(6, 33px) repeat(4, 23px); grid-auto-rows: 25px; align-content: start; }
    .cell { gap: 3px; justify-content: flex-start; }
    .grid5 { display: grid; grid-template-columns: repeat(5, 23px); grid-auto-rows: 25px; padding-left: 8px; }
    .g-param .body { padding-left: 5px; gap: 3px; }
    .g-surface .body { padding-left: 7px; }
    .g-surface .big { width: 35px; }
    .g-surface .big + .big { width: 54px; margin: 0 3px 0 3px; }
    .grid3 { display: grid; grid-template-columns: 33px 34px 20px; grid-auto-rows: 25px; }
    .gridA { display: grid; grid-template-columns: repeat(3, 22px); grid-auto-rows: 25px; padding-left: 6px; }
    .g-analysis .body { padding-left: 6px; }
    .g-analysis .stack { width: 83px; margin-right: 4px; }
    .g-analysis .stack > * { height: 17px; gap: 1px; white-space: nowrap; }
    .g-analysis .big { width: 36px; margin-right: 5px; }
    .g-back .body { padding: 0 0 0 3px; gap: 7px; }
    .g-back .caption { padding: 0 18px 0 2px; }
    .swatches { display: flex; flex-direction: column; justify-content: space-around; width: 25px; height: 52px; border: 1px solid #ccc; padding: 0 3px; }
    .swatch { height: 18px; border: 1px solid #444; border-top-width: 2px; background: #efefef; }
    .swatch + .swatch { background: #c9c9c9; }
    .steps { display: flex; flex-direction: column; justify-content: space-around; height: 52px; }
    .hot { background: #cfe5ea; outline: 1px solid #b9d6dd; outline-offset: -1px; }
    .g-design .hot { width: 22px; height: 21px; justify-content: center; margin-top: 2px; }
    .lone { padding-left: 2px; }
    .select { display: flex; align-items: center; height: 32px; flex: none; overflow: hidden; }
    .select .bar { margin: 4px 0; }
    .menu { gap: 2px; width: 43px; }
    .menu span { margin-right: 2px; }
    .menu svg:first-child { margin-left: -4px; }
    .drop { position: relative; display: flex; align-items: center; margin-left: 8px; height: 16px; width: 104px; flex: none; }
    .drop + .drop { margin-left: 7px; width: 110px; }
    .drop select { appearance: none; width: 100%; height: 100%; border: 1px solid #999; border-radius: 0; background: #fff; font: inherit; color: #333; padding: 0 14px 0 1px; outline: 0; }
    .drop .caret { position: absolute; right: 5px; width: 7px; pointer-events: none; }
    .drop.small { width: 38px; margin-left: 7px; }
    .run { display: flex; align-items: center; justify-content: space-between; flex: none; }
    .run button { height: 21px; min-width: 21px; justify-content: center; gap: 4px; }
    .r1 { width: 206px; margin: 0 4px; }
    .r2 { width: 340px; }
    .pair { display: flex; flex-direction: column; justify-content: center; gap: 2px; flex: none; }
    .pair button { min-width: 0; height: 13px; gap: 2px; justify-content: flex-start; }
    .p1 { margin: 0 4px 0 3px; }
    .r3 { width: 188px; margin: 0 4px 0 6px; }
    .p2 { width: 30px; }
    .r4 { width: 94px; margin: 0 0 0 4px; }
    .p3 { margin: 0 4px; }
    .p4 { margin: 0 8px; }
    .strip { display: flex; justify-content: flex-end; gap: 3px; height: 34px; flex: none; border-top: 2px solid #9c9c9c; padding: 2px 2px 18px 0; align-items: flex-start; border-bottom: 1px solid #4694a6; }
    .view { flex: 1; min-height: 0; background: linear-gradient(#b1b2b6, #cbccd0 35%, #e0e1e6 80%, #e6e7ea); }
    .view svg { width: 100%; height: 100%; }
    .start { position: absolute; left: 0; top: 157px; bottom: 11px; width: 538px; display: flex; background: #383838; color: #fff; box-shadow: 0 0 7px rgba(0, 0, 0, .35); overflow: hidden; font-size: 11px; line-height: 15px; }
    .rail { width: 35px; display: flex; flex-direction: column; padding: 16px 0 12px; gap: 23px; flex: none; }
    .rail button { margin-left: -8px; height: 18px; }
    .rail .top { margin-bottom: auto; }
    .apps { list-style: none; margin: 0; padding: 7px 0 0; width: 224px; flex: none; }
    .apps li, .apps button { display: flex; align-items: center; height: 31px; width: 100%; }
    .apps .head { padding-top: 4px; }
    .label { margin-left: 6px; padding-top: 1px; }
    .more { margin: 0 20px 0 auto; }
    .tiles { display: flex; flex-direction: column; }
    .section { display: grid; grid-template-columns: repeat(6, 41px); gap: 4px; }
    .first { margin-top: 42px; }
    .third { margin-top: 35px; }
    .heading { margin: 0; font: inherit; height: 35px; padding-top: 10px; }
    .tile { position: relative; grid-column: span 2; height: 86px; background: #3f9bfd; flex-direction: column; justify-content: center; }
    .tile .cap { position: absolute; left: 7px; bottom: 3px; }
    .c1 { grid-column: 1 / span 2; } .c2 { grid-column: 2 / span 2; } .c3 { grid-column: 3 / span 2; } .c4 { grid-column: 4 / span 2; } .c5 { grid-column: 5 / span 2; }
    .date { background: #0078d7; }
    .weekday { padding-top: 3px; }
    .day { font: 300 36px/42px "Open Sans", sans-serif; }
    .netflix { background: #000; }
    .brand { font: 700 16px/20px Roboto, sans-serif; color: #e01020; }
    .weather { background: radial-gradient(ellipse at 80% 15%, #78808d, transparent 45%), linear-gradient(#4b5366, #48546c 50%, #33405a); justify-content: flex-start; align-items: stretch; padding: 3px 6px; text-align: left; }
    .temps { display: flex; justify-content: space-between; align-items: center; margin-top: 11px; padding-right: 5px; }
    .now { font: 300 20px/26px Roboto, sans-serif; }
    .range { display: flex; flex-direction: column; line-height: 14px; }
    .low { color: #aab; }
    .taskbar { display: flex; height: 11px; flex: none; background: #443a3a; position: relative; overflow: hidden; align-items: flex-start; }
    .begin { width: 22px; height: 11px; background: #686262; padding-left: 2px; }
    .search { width: 296px; height: 34px; flex: none; border: 2px solid #3f8fdf; background: #fff; display: flex; align-items: center; color: #555; padding-left: 13px; gap: 4px; font-size: 12px; }
    .search svg { margin-top: -4px; }
    .search input { border: 0; outline: 0; font: inherit; width: 240px; padding: 0 0 0 8px; background: none; height: 26px; }
    .slot { height: 11px; width: 47px; background: #564c4b; padding: 8px 0 0 14px; align-items: flex-start; overflow: hidden; }
    .dark { background: #433838; width: 43px; }
    .lite { background: #5a504f; width: 46px; }
    .none { background: none; width: 139px; }
    .clock { margin-left: auto; padding: 1px 31px 0 0; color: #fff; font-size: 11px; line-height: 16px; flex: none; }
    .glow { position: absolute; left: 512px; bottom: -10px; width: 41px; height: 41px; border-radius: 50%; background: #e2e400; mix-blend-mode: multiply; pointer-events: none; }
    .arrow { position: absolute; left: 531px; bottom: -9px; pointer-events: none; }
  `;

  private tool(name: string, opts: { drop?: boolean; hot?: boolean; size?: number } = {}) {
    return html`<button class=${classMap({ cell: true, hot: !!opts.hot })} aria-label=${name}>${icon(name, opts.size ?? 18)}${opts.drop ? caret : nothing}</button>`;
  }

  private many(list: string) {
    return list.split(" ").map((n) => {
      const hot = n.endsWith("*");
      const drop = n.endsWith("+");
      return this.tool(n.replace(/[*+]$/, ""), { hot, drop });
    });
  }

  private big(art: string, a: string | TemplateResult, b: string, drop = false, box = 26) {
    return html`<button class="big">${draw(icons[art], 24, box)}<span>${a}</span><span>${b}${drop ? caret : nothing}</span></button>`;
  }

  private caption(text: string, drop = true) {
    return html`<div class="caption"><span>${text}</span>${drop ? caret : nothing}</div>`;
  }

  private renderQuick() {
    const q = (names: string) => names.split(" ").map((n) => html`<button aria-label=${n}>${icon(n, 13)}</button>`);
    return html`<header class="quick">
      <button class="logo" aria-label="NX">${icon("nx", 14)}</button><i class="bar"></i>
      <div class="tools">${q("fresh open save")}</div><i class="bar"></i>
      <div class="tools">${q("undo")}${caret}${q("redo")}</div><i class="bar"></i>
      <div class="tools">${q("cut copy paste move")}</div><i class="bar"></i>
      <div class="tools words"><button aria-label="Windows">${icon("swap", 12)}</button><button>Switch Window</button><button aria-label="Layout">${icon("win", 12)}</button><button>Window</button>${caret}
        <svg width="8" height="7" viewBox="0 0 8 7"><path d="M1 1H7" stroke="#333"/><path d="M1 3H7L4 6Z" fill="#333"/></svg></div>
      <h1 class="title">NX 12 - Modeling</h1>
      <span class="siemens">SIEMENS</span>
      <div class="winctl"><button aria-label="Minimize">${icon("mini", 13)}</button><button aria-label="Restore">${icon("restore", 12)}</button></div>
    </header>`;
  }

  private renderTabs() {
    return html`<div class="tabs">
      <nav><button class="tab file">File</button><button class="tab home">Home</button>
        ${["View", "Render", "Assemblies", "Application"].map((t) => html`<button class="tab">${t}</button>`)}</nav>
      <div class="tail">
        <label class="find"><input type="text" placeholder="Find a Command" aria-label="Find a Command">${icon("lens", 11)}</label>
        ${icon("full", 12)}${icon("chev", 12)}
      </div>
    </div>`;
  }

  private renderRibbon() {
    return html`<div class="ribbon">
      <section class="group g-design"><div class="body">
        <div class="stack"><button class="name">${icon("modelling", 9)}Modeling</button><button class="name">${icon("metal", 9)}Sheet Metal</button></div>
        <div class="stack"><button class="lone" aria-label="Curve">${icon("sketchCurve", 17)}</button>${this.tool("convert", { hot: true })}</div>
      </div>${this.caption("Design")}</section>
      <section class="group g-shaded"><div class="body">${this.big("shaded", html`<u>1</u> Shaded`, "with Edges", true, 18)}</div></section>
      <section class="group g-feature"><div class="body">
        ${this.big("sketchTask", "Sketch in Task", "Environment")}${this.big("plane", "Datum", "Plane", true)}
        <div class="grid6">${this.many("extrude+ block+ hole+ blend+ shell slabTrim orangeA orangeB syncCopy align unite+ draftHole draftFace trim+ offset+ patternCol+ dotsO slabO syncDots liftO")}</div>
      </div>${this.caption("Feature")}</section>
      <section class="group g-sync"><div class="body"><div class="grid5">${this.many("s1 s2 s3 s4 s5 s6 s7 s8 s9 s10")}</div></div>${this.caption("Synchronous Modeling")}</section>
      <section class="group g-param"><div class="body">${this.big("removeP", "Remove", "Parameters")}<div class="stack">${this.tool("params")}</div></div></section>
      <section class="group g-surface"><div class="body">${this.big("studio", "Studio", "Surface")}${this.big("mesh", "Through", "Curve Mesh")}
        <div class="grid3">${this.many("sheet ruled+ fold sweep+ tube patch")}</div></div>${this.caption("Surface")}</section>
      <section class="group g-assy"><div class="body"><div class="gridA">${this.many("wire moveF orangeF moveE redF")}</div></div></section>
      <section class="group g-measure"><div class="body">${this.big("measure", "Measure", "Distance")}</div>${this.caption("Measure")}</section>
      <section class="group g-analysis"><div class="body">
        <div class="stack"><button>${icon("reflect", 12)}Reflection</button><button>${icon("section", 12)}Section Analysis</button></div>
        ${this.big("draftA", "Draft", "Analysis")}<div>${icon("spark", 12)}</div></div></section>
      <section class="group g-back"><div class="body">
        <div class="swatches"><button class="swatch" aria-label="Light"></button><button class="swatch" aria-label="Gray"></button></div>
        <div class="steps">${caret}${caret}${caret}</div></div>${this.caption("Back...")}</section>
    </div>`;
  }

  private pair(cls: string, a: string, b: string, drop = false) {
    return html`<div class="pair ${cls}"><button aria-label=${a}>${icon(a, 12)}</button><button aria-label=${b}>${icon(b, 12)}${drop ? caret : nothing}</button></div>`;
  }

  private renderSelection() {
    const drop = (text: string, label: string, cls = "") =>
      html`<label class="drop ${cls}"><select aria-label=${label}><option>${text}</option></select>${caret}</label>`;
    return html`<div class="select">
      <button class="menu">${icon("menuI", 8)}<span><u>M</u>enu</span>${caret}</button><i class="bar"></i>
      ${drop("No Selection Filter", "Filter")}${drop("Entire Assembly", "Scope")}
      <div class="run r1">${this.many("addCube+ filterG filterB+ targetR rotate targetG dashCube marquee+")}</div>
      <div class="run r2">${this.many("h1* h2* h3* h4 endp* midp* tang poles* spline* inter centre* quad cross* ptOn* face")}</div>
      ${this.pair("p1", "tinyA", "tinyB")}<i class="bar"></i>
      <div class="run r3">${this.many("wcs gridT hand fit+ bracket+ block+ wedge")}</div>
      ${this.pair("p2", "gstack", "play", true)}<i class="bar"></i>
      ${drop("1", "Layer", "small")}
      <div class="run r4">${this.many("layers pick+ paint nodes")}</div>
      ${this.pair("p3", "csysA", "csysB")}<i class="bar"></i>
      ${this.pair("p4", "rew", "back")}${this.pair("", "fwd", "ffw")}
    </div>`;
  }

  private renderModel() {
    const tilt = (cx: number, cy: number, a: number, b: number, fill: string, edge = "#2c3a3e") =>
      svg`<ellipse cx=${cx} cy=${cy} rx=${a} ry=${b} transform="rotate(-8.800 ${cx} ${cy})" fill=${fill} stroke=${edge} stroke-width=".8"/>`;
    return html`<svg viewBox="0 178 1280 531" preserveAspectRatio="xMidYMid meet" fill="none" role="img" aria-label="Model">
      <defs>
        <linearGradient id="wall"><stop offset="0" stop-color="#677376"/><stop offset=".38" stop-color="#525b5f"/><stop offset=".62" stop-color="#667376"/><stop offset=".92" stop-color="#82949a"/><stop offset="1" stop-color="#7a898c"/></linearGradient>
        <linearGradient id="bore"><stop offset="0" stop-color="#8a9a9e"/><stop offset=".3" stop-color="#74848a"/><stop offset=".6" stop-color="#525a5e"/><stop offset="1" stop-color="#62696e"/></linearGradient>
        <clipPath id="pocket"><ellipse cx="759" cy="370" rx="189.600" ry="102.700" transform="rotate(-8.800 759 370)"/></clipPath>
      </defs>
      <path d="M972.700 336.900 986.200 427A216 117 -8.800 0 1 558.800 493L545.300 403.100Z" fill="url(#wall)" stroke="#2c3a3e" stroke-width=".8"/>
      <path d="M979.700 382.500A216 117 -8.800 0 1 552.300 448.500" stroke="#4258e6" stroke-width="1.500"/>
      <path d="M715 536 711.500 546H729L733 536" stroke="#4258e6" stroke-width="1.500"/>
      ${tilt(759, 370, 216.3, 117.2, "#c4dbe1")}
      ${tilt(759, 370, 189.6, 102.7, "url(#bore)")}
      <g clip-path="url(#pocket)">${tilt(765, 409.5, 189.6, 102.7, "#c4dbe1")}</g>
      ${tilt(759, 370, 189.6, 102.7, "none")}
      <path d="M812.500 362 818.500 401A54 29.200 -8.800 0 1 711.500 417.500L705.500 378.500Z" fill="url(#wall)" stroke="#2c3a3e" stroke-width=".8"/>
      ${tilt(759, 370.3, 54.1, 29.2, "#c4dbe1")}
      ${tilt(759, 370.3, 36.4, 19.7, "url(#bore)")}
      <path d="M765.500 415 761 378M763 391 767 376 770 389" stroke="#a04048" stroke-width=".9"/>
      <path d="M757 378 759 367 762 377Z" fill="#8a1c24"/>
      <path d="M765.500 415 763 391M765.500 415H819M765.500 415 771.500 399.500H799.500L794 415 790 391M771.500 399.500V391M772 390 775 384" stroke="#e8eef0" stroke-width=".9"/>
      <path d="M810 413 820 415 810 416Z" fill="#fff"/><circle cx="774.500" cy="389.500" r="2" fill="#6a5a62"/>
      <text x="755" y="367" font-size="9" font-family="Roboto, sans-serif" fill="#a85058">Z</text>
      <text x="774" y="385" font-size="9" font-family="Roboto, sans-serif" fill="#eef4f6">Y</text>
    </svg>`;
  }

  private renderStart() {
    return html`<aside class="start">
      <div class="rail"><button class="top" aria-label="Start">${icon("burger", 16)}</button>
        ${["user", "docW", "pic", "gear", "power"].map((n) => html`<button aria-label=${n}>${icon(n, n === "user" ? 18 : 16)}</button>`)}</div>
      <ul class="apps">${apps.map((a) => a.head
        ? html`<li class="head">${a.name}</li>`
        : html`<li><button>${draw(a.art!, 28, 28)}<span class="label">${a.name}</span>${a.more ? html`<svg class="more" width="10" height="6" viewBox="0 0 10 6" fill="none"><path d="M1 1 5 5 9 1" stroke="#ddd"/></svg>` : nothing}</button></li>`)}</ul>
      <div class="tiles">${tileGroups.map((g) => html`
        ${g.title ? html`<h2 class="heading">${g.title}</h2>` : nothing}
        <div class="section ${g.cls}">${g.tiles.map((t) => html`
          <button class="tile ${t.kind ?? ""} ${t.start ? `c${t.start}` : ""}">${t.art ? draw(t.art, 28, 32) : nothing}${t.body ?? nothing}${t.label ? html`<span class="cap">${t.label}</span>` : nothing}</button>`)}</div>`)}</div>
    </aside>`;
  }

  private renderTaskbar() {
    const slot = (cls: string, art: SVGTemplateResult) => html`<button class="slot ${cls}" aria-label="App">${draw(art, 18)}</button>`;
    return html`<footer class="taskbar">
      <div class="begin"></div>
      <label class="search">${icon("lens", 14)}<input type="text" placeholder="검색하려면 여기에 입력하십시오." aria-label="Search"></label>
      ${slot("", svg`<circle cx="9" cy="8" r="8" fill="#e04a3c"/>`)}${slot("", svg``)}${slot("", svg``)}
      ${slot("dark", svg`<path d="M4 12Q6 3 14 1 18 0 16 6" stroke="#f4c83c" stroke-width="3"/><path d="M6 8 12 4V10Z" fill="#28b4e4"/>`)}
      ${slot("lite", svg`<path d="M0 1H7L9 3H18V12H0Z" fill="#f0b020"/>`)}${slot("lite", svg``)}${slot("lite", svg``)}
      ${slot("none", svg`<path d="M0 1 12 2 9 12Z" fill="#e04868"/>`)}
      ${slot("none", svg`<rect width="14" height="14" rx="3" fill="#fff" stroke="#d83040" stroke-width="2"/>`)}
      <time class="clock">오후 3:41</time>
    </footer>`;
  }

  render() {
    return html`
      ${this.renderQuick()}${this.renderTabs()}${this.renderRibbon()}${this.renderSelection()}
      <div class="strip">${icon("grayTool", 11)}${icon("full", 11)}</div>
      <main class="view">${this.renderModel()}</main>
      ${this.renderTaskbar()}${this.renderStart()}
      <i class="glow"></i>
      <svg class="arrow" width="14" height="20" viewBox="0 0 14 20"><path d="M1 1V16L5 12.500 8 19 10 18 7.500 12H12Z" fill="#fff" stroke="#222"/></svg>`;
  }
}
